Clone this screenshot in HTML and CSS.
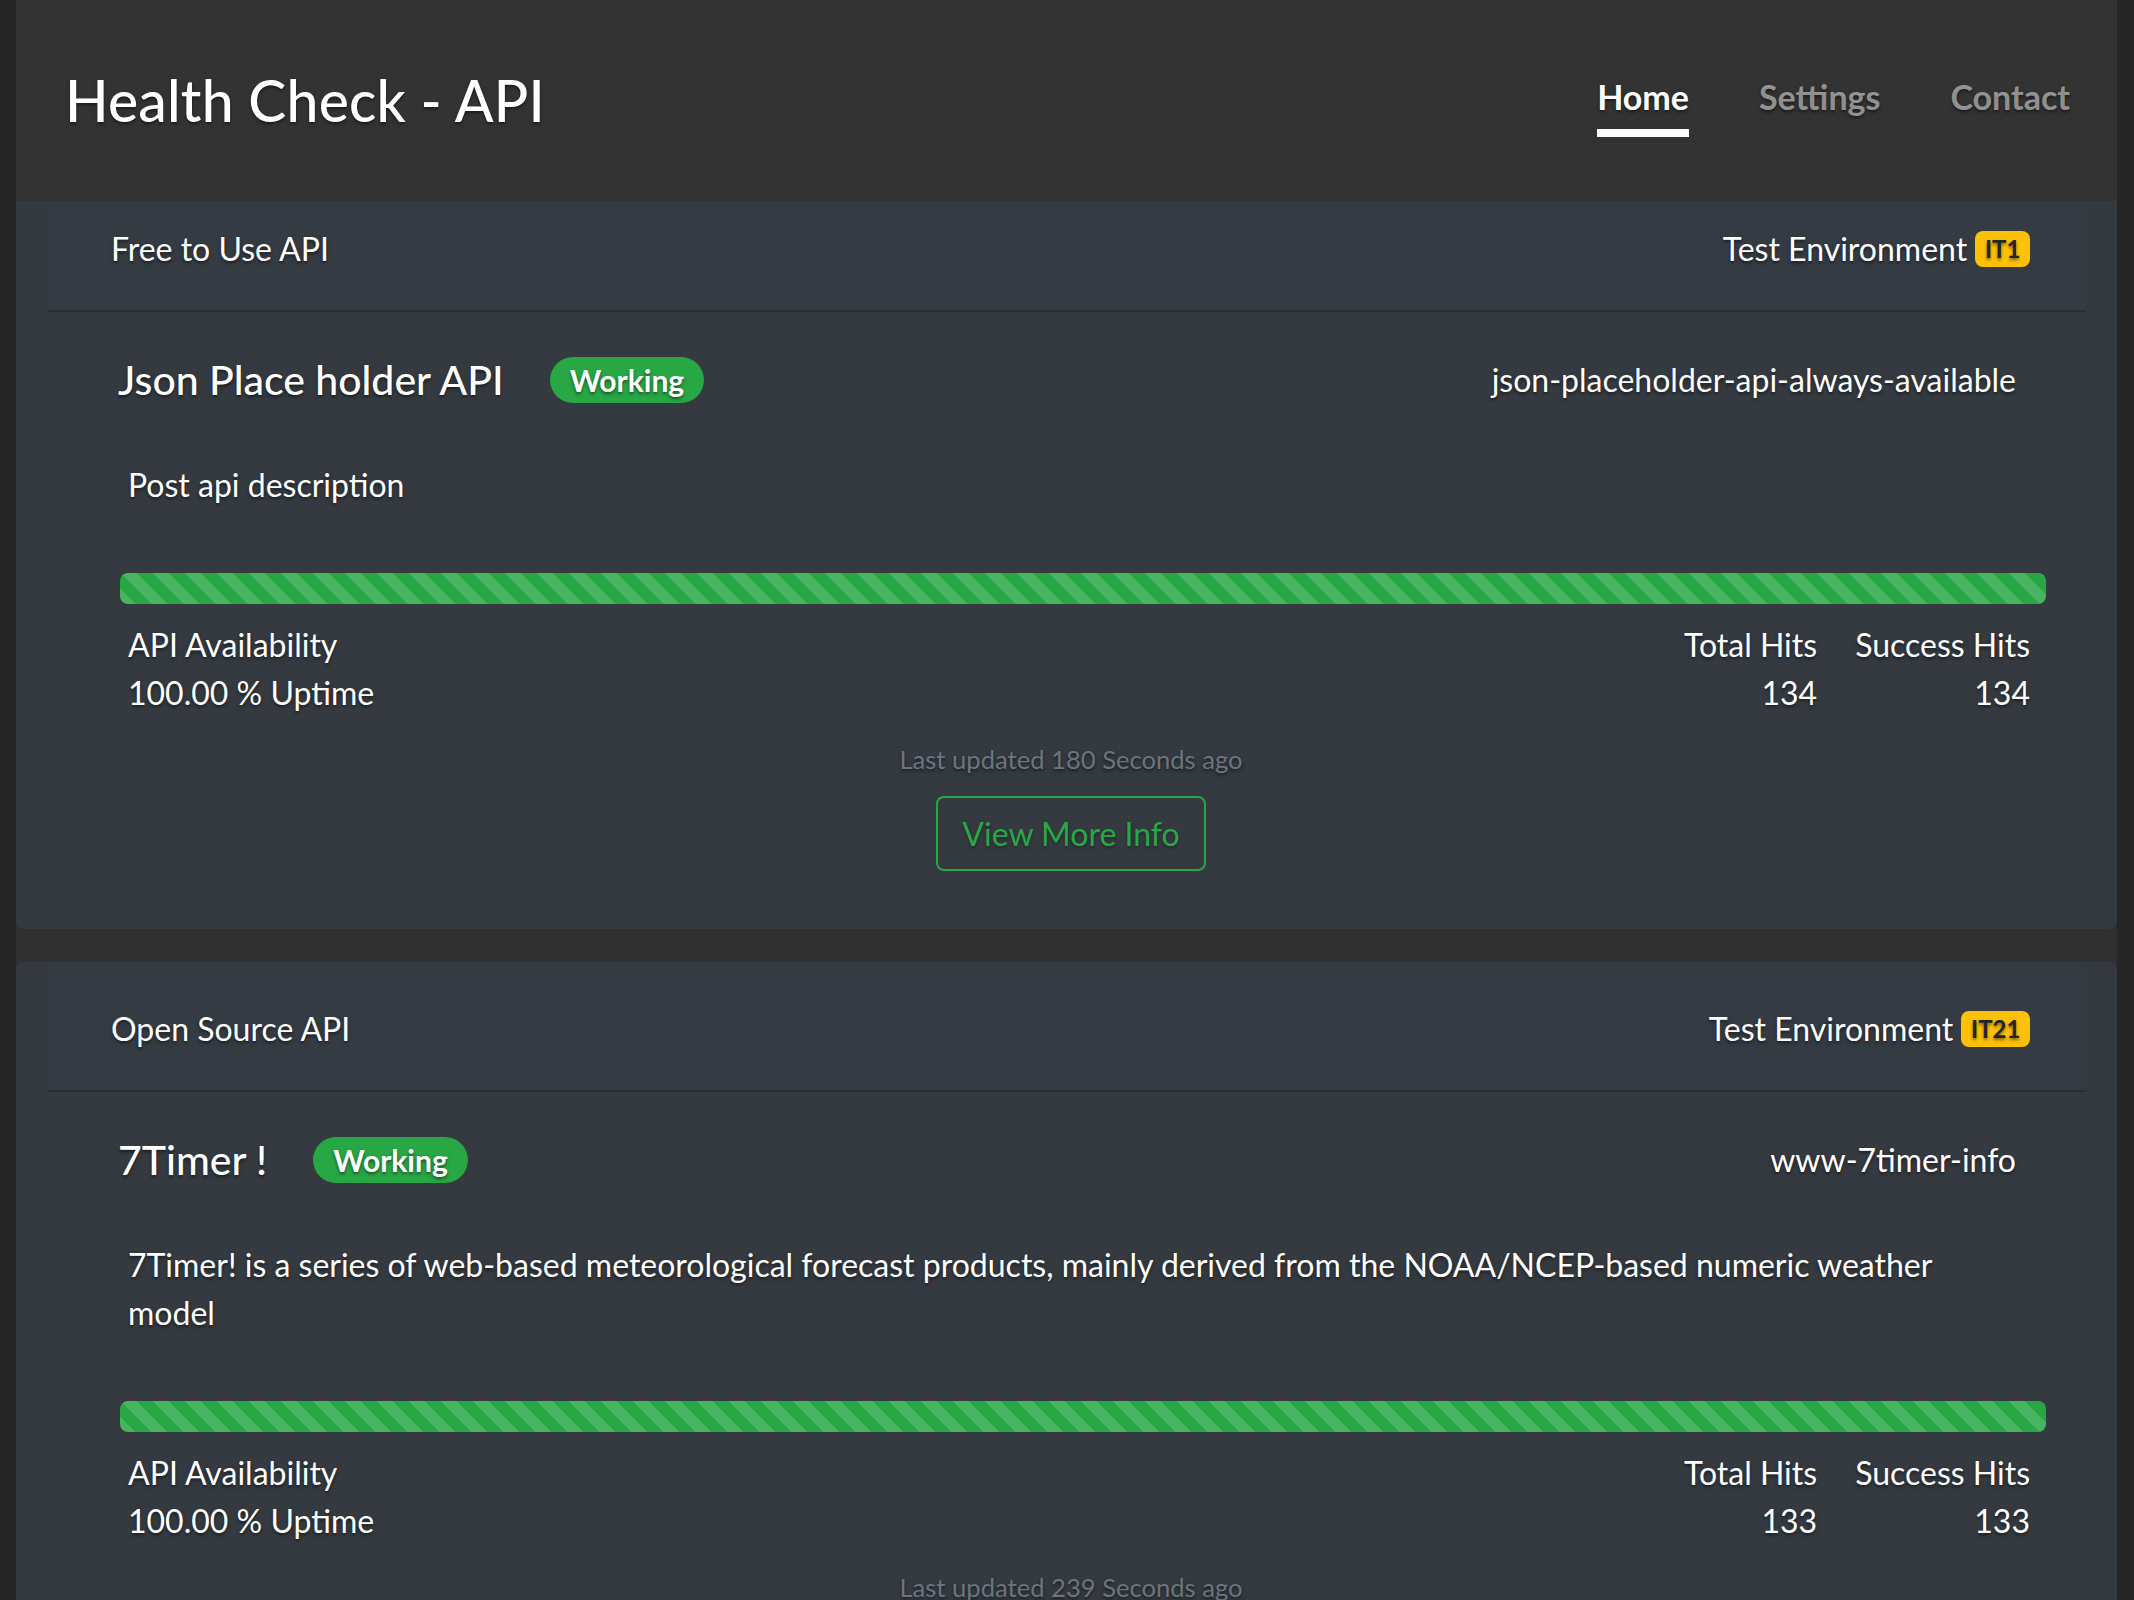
FILE: index.html
```html
<!DOCTYPE html>
<html lang="en">
<head>
<meta charset="utf-8">
<title>Health Check - API</title>
<link rel="stylesheet" href="styles.css">
</head>
<body>
<div class="page">
  <header class="masthead">
    <h3 class="brand">Health Check - API</h3>
    <nav class="nav">
      <a class="nav-link active" href="#">Home</a>
      <a class="nav-link" href="#">Settings</a>
      <a class="nav-link" href="#">Contact</a>
    </nav>
  </header>

  <main class="cards">
    <section class="card">
      <div class="card-header">
        <span>Free to Use API</span>
        <span>Test Environment <span class="badge-env">IT1</span></span>
      </div>
      <div class="card-body">
        <div class="title-row">
          <h5 class="card-title">Json Place holder API <span class="badge-pill">Working</span></h5>
          <span class="slug">json-placeholder-api-always-available</span>
        </div>
        <p class="desc">Post api description</p>
        <div class="progress"><div class="progress-bar" style="width:100%"></div></div>
        <div class="stats">
          <div class="avail">
            <div>API Availability</div>
            <div>100.00 % Uptime</div>
          </div>
          <div class="hits">
            <div class="hit"><div>Total Hits</div><div>134</div></div>
            <div class="hit"><div>Success Hits</div><div>134</div></div>
          </div>
        </div>
        <p class="updated">Last updated 180 Seconds ago</p>
        <div class="actions"><button class="btn-outline" type="button">View More Info</button></div>
      </div>
    </section>

    <section class="card">
      <div class="card-header">
        <span>Open Source API</span>
        <span>Test Environment <span class="badge-env">IT21</span></span>
      </div>
      <div class="card-body">
        <div class="title-row">
          <h5 class="card-title">7Timer ! <span class="badge-pill">Working</span></h5>
          <span class="slug">www-7timer-info</span>
        </div>
        <p class="desc">7Timer! is a series of web-based meteorological forecast products, mainly derived from the NOAA/NCEP-based numeric weather model</p>
        <div class="progress"><div class="progress-bar" style="width:100%"></div></div>
        <div class="stats">
          <div class="avail">
            <div>API Availability</div>
            <div>100.00 % Uptime</div>
          </div>
          <div class="hits">
            <div class="hit"><div>Total Hits</div><div>133</div></div>
            <div class="hit"><div>Success Hits</div><div>133</div></div>
          </div>
        </div>
        <p class="updated">Last updated 239 Seconds ago</p>
        <div class="actions"><button class="btn-outline" type="button">View More Info</button></div>
      </div>
    </section>
  </main>
</div>
</body>
</html>
```

FILE: styles.css
```css
html, body {
  margin: 0;
  padding: 0;
}

body {
  background: #262626;
  color: #fff;
  font-family: Lato, "Open Sans", sans-serif;
  text-shadow: 0 1.6px 3.2px rgba(0, 0, 0, 0.5);
}

.page {
  margin: 0 17px 0 16px;
  background: #303030;
  min-height: 100vh;
}

.masthead {
  position: relative;
  z-index: 1;
  height: 201px;
  box-sizing: border-box;
  background: #333;
  display: flex;
  align-items: center;
  justify-content: space-between;
  padding: 0 47px 0 49px;
}

.brand {
  margin: 0;
  font-size: 57px;
  font-weight: 500;
  line-height: 1.2;
  letter-spacing: 0.2px;
}

.nav {
  display: flex;
  gap: 70px;
}

.nav-link {
  font-size: 34px;
  font-weight: 700;
  line-height: 48px;
  padding: 8px 0;
  border-bottom: 8px solid transparent;
  color: rgba(255, 255, 255, 0.5);
  text-decoration: none;
}

.nav-link.active {
  color: #fff;
  border-bottom-color: #fff;
}

.cards {
  margin-top: -19px;
}

.card {
  background: #343a40;
  border-radius: 8px;
  margin-bottom: 33px;
}

.card-header {
  margin: 0 31px 0 32px;
  padding: 43px 56px 37px 63px;
  display: flex;
  justify-content: space-between;
  align-items: center;
  background: #353b43;
  border-bottom: 2px solid #2b3035;
  font-size: 32px;
  line-height: 48px;
}

.badge-env {
  display: inline-block;
  font-size: 24px;
  font-weight: 700;
  line-height: 1;
  padding: 6px 9.6px;
  border-radius: 8px;
  background: #ffc107;
  color: #212529;
  vertical-align: 3px;
}

.card-body {
  padding: 44px 0 58px;
}

.title-row {
  display: flex;
  justify-content: space-between;
  align-items: center;
  height: 48px;
  padding: 0 101px 0 102px;
}

.card-title {
  margin: 0;
  font-size: 41px;
  font-weight: 500;
  line-height: 48px;
  display: flex;
  align-items: center;
  gap: 46px;
}

.badge-pill {
  font-size: 30px;
  font-weight: 700;
  line-height: 1;
  padding: 8px 20px;
  border-radius: 999px;
  background: #28a745;
  color: #fff;
}

.slug {
  font-size: 32px;
  line-height: 48px;
}

.desc {
  margin: 57px 0 0;
  padding: 0 100px 0 112px;
  font-size: 32px;
  line-height: 48px;
}

.progress {
  margin: 64px 71px 0 104px;
  height: 31px;
  border-radius: 8px;
  overflow: hidden;
  background: #e9ecef;
  display: flex;
}

.progress-bar {
  background-color: #28a745;
  background-image: linear-gradient(45deg,
    rgba(255, 255, 255, 0.15) 25%, transparent 25%,
    transparent 50%, rgba(255, 255, 255, 0.15) 50%,
    rgba(255, 255, 255, 0.15) 75%, transparent 75%, transparent);
  background-size: 32px 32px;
}

.stats {
  margin-top: 17px;
  padding: 0 87px 0 112px;
  display: flex;
  justify-content: space-between;
  font-size: 32px;
  line-height: 48px;
}

.hits {
  display: flex;
  gap: 38px;
  text-align: right;
}

.updated {
  margin: 23px 0 0;
  padding-left: 9px;
  text-align: center;
  font-size: 25.6px;
  line-height: 38px;
  color: #6c757d;
}

.actions {
  margin-top: 18px;
  padding-left: 9px;
  display: flex;
  justify-content: center;
}

.btn-outline {
  font-family: inherit;
  font-size: 32px;
  line-height: 48px;
  padding: 11.5px 24px;
  border: 2px solid #28a745;
  border-radius: 8px;
  background: transparent;
  color: #28a745;
  text-shadow: 0 1.6px 3.2px rgba(0, 0, 0, 0.3);
  cursor: pointer;
}
```
